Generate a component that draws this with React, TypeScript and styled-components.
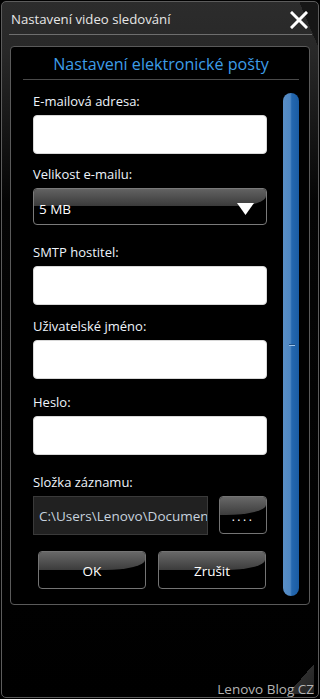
import styled, { createGlobalStyle } from "styled-components";

const FONT = `"Open Sans", "Noto Sans", sans-serif`;

const GlobalStyle = createGlobalStyle`
  html, body {
    margin: 0;
    padding: 0;
    background: #000;
  }
  body {
    width: 320px;
    height: 699px;
    overflow: hidden;
    font-family: ${FONT};
  }
`;

type FieldDef = {
  label: string;
  gap: number;
  kind: "input" | "select";
};

const fields: FieldDef[] = [
  { label: "E-mailová adresa:", gap: 0, kind: "input" },
  { label: "Velikost e-mailu:", gap: 12, kind: "select" },
  { label: "SMTP hostitel:", gap: 19, kind: "input" },
  { label: "Uživatelské jméno:", gap: 13, kind: "input" },
  { label: "Heslo:", gap: 15, kind: "input" },
];

function App() {
  return (
    <>
      <GlobalStyle />
      <Window>
        <TitleBar>
          <TitleText>Nastavení video sledování</TitleText>
          <CloseButton aria-label="Zavřít">
            <svg width="18" height="18" viewBox="0 0 18 18">
              <path
                d="M2 2 L16 16 M16 2 L2 16"
                stroke="#fff"
                strokeWidth="3"
                strokeLinecap="square"
              />
            </svg>
          </CloseButton>
        </TitleBar>

        <Panel>
          <Heading>Nastavení elektronické pošty</Heading>
          <Divider />
          <Body>
            <Form>
              {fields.map((f) => (
                <Field key={f.label} $gap={f.gap}>
                  <Label>{f.label}</Label>
                  {f.kind === "input" ? (
                    <TextBox />
                  ) : (
                    <Select>
                      <SelectValue>5 MB</SelectValue>
                      <svg width="17" height="12" viewBox="0 0 17 12">
                        <path d="M0 0 H17 L8.5 12 Z" fill="#fff" />
                      </svg>
                    </Select>
                  )}
                </Field>
              ))}
              <Field $gap={19}>
                <Label>Složka záznamu:</Label>
                <PathRow>
                  <PathBox>C:\Users\Lenovo\Documents</PathBox>
                  <GlossButton $w={48} $h={38}>
                    <Dots>....</Dots>
                  </GlossButton>
                </PathRow>
              </Field>
              <Actions>
                <GlossButton $w={108} $h={38}>
                  <ButtonText>OK</ButtonText>
                </GlossButton>
                <GlossButton $w={108} $h={38}>
                  <ButtonText>Zrušit</ButtonText>
                </GlossButton>
              </Actions>
            </Form>
            <ScrollThumb>
              <Grip />
            </ScrollThumb>
          </Body>
        </Panel>

        <Watermark>Lenovo Blog CZ</Watermark>
        <ResizeGrip />
      </Window>
    </>
  );
}

const Window = styled.div`
  position: relative;
  box-sizing: border-box;
  margin: 1px 0 0 1px;
  width: 318px;
  height: 697px;
  border: 1px solid #5c5c5c;
  border-radius: 5px;
  overflow: hidden;
  background: linear-gradient(67deg, transparent 50%, #161616 50%) right top / 18px 46px no-repeat,
    linear-gradient(to bottom, #2c2c2c 0px, #282828 50px, #050505 200px, #000 100%);
`;

const TitleBar = styled.div`
  display: flex;
  align-items: center;
  justify-content: space-between;
  height: 31px;
  margin: 0 6px 0 7px;
  padding: 1px 3px 0 2px;
  border-bottom: 1px solid #6e6e6e;
`;

const TitleText = styled.span`
  font-size: 13.2px;
  color: #e6e6e6;
`;

const CloseButton = styled.div`
  display: flex;
  width: 18px;
  height: 18px;
  margin-top: 2px;
  margin-right: 1px;
`;

const Panel = styled.div`
  box-sizing: border-box;
  margin: 11px 8px 0 8px;
  height: 559px;
  padding: 7px 10px 7px 22px;
  border: 1px solid #5a5a5a;
  border-radius: 4px;
  background: #000;
`;

const Heading = styled.div`
  height: 20px;
  line-height: 20px;
  margin-left: -10px;
  text-align: center;
  font-size: 16.1px;
  color: #3d9de8;
`;

const Divider = styled.div`
  height: 1px;
  margin: 5px 0 13px -10px;
  background: #4a4a4a;
`;

const Body = styled.div`
  display: flex;
  justify-content: space-between;
  height: 503px;
`;

const Form = styled.div`
  display: flex;
  flex-direction: column;
  width: 234px;
`;

const Field = styled.div<{ $gap: number }>`
  display: flex;
  flex-direction: column;
  margin-top: ${(p) => p.$gap}px;
`;

const Label = styled.div`
  height: 16px;
  line-height: 16px;
  margin-bottom: 6px;
  font-size: 13px;
  color: #eef4fb;
`;

const TextBox = styled.div`
  box-sizing: border-box;
  height: 39px;
  background: #fff;
  border: 1px solid #d8d8d8;
  border-radius: 4px;
`;

const Select = styled.div`
  position: relative;
  box-sizing: border-box;
  display: flex;
  align-items: center;
  justify-content: space-between;
  height: 37px;
  padding: 4px 12px 0 5px;
  border: 1px solid #7a7a7a;
  border-radius: 4px;
  background: #000;
  overflow: hidden;

  &::before {
    content: "";
    position: absolute;
    left: 0;
    top: 0;
    right: 0;
    height: 17px;
    background: linear-gradient(to bottom, #626262, #3a3a3a);
    border-radius: 0 0 30px 0 / 0 0 10px 0;
  }

  & > * {
    position: relative;
  }
`;

const SelectValue = styled.span`
  font-size: 13.5px;
  color: #fff;
`;

const PathRow = styled.div`
  display: flex;
  justify-content: space-between;
  align-items: flex-start;
`;

const PathBox = styled.div`
  box-sizing: border-box;
  width: 175px;
  height: 39px;
  padding: 0 0 0 5px;
  line-height: 38px;
  font-size: 13.5px;
  color: #c6d2de;
  white-space: nowrap;
  overflow: hidden;
  background: #212121;
  border: 1px solid #3a3a3a;
`;

const GlossButton = styled.div<{ $w: number; $h: number }>`
  position: relative;
  box-sizing: border-box;
  display: flex;
  align-items: center;
  justify-content: center;
  width: ${(p) => p.$w}px;
  height: ${(p) => p.$h}px;
  border: 1px solid #747474;
  border-radius: 4px;
  background: #000;
  overflow: hidden;

  &::before {
    content: "";
    position: absolute;
    left: 0;
    top: 0;
    right: 0;
    height: 50%;
    background: linear-gradient(to bottom, #686868, #3c3c3c);
    border-radius: 0 0 40px 0 / 0 0 10px 0;
  }

  & > * {
    position: relative;
  }
`;

const ButtonText = styled.span`
  margin-top: 1px;
  font-size: 13.5px;
  color: #fff;
`;

const Dots = styled.span`
  margin-top: 2px;
  font-size: 12px;
  letter-spacing: 2.5px;
  color: #fff;
`;

const Actions = styled.div`
  display: flex;
  gap: 12px;
  margin-top: 16px;
  padding-left: 5px;
`;

const ScrollThumb = styled.div`
  display: flex;
  align-items: center;
  justify-content: center;
  width: 16px;
  border-radius: 8px;
  background: linear-gradient(
    to right,
    #5a8fc6 0%,
    #4f88c4 45%,
    #2468b0 55%,
    #1a5ba2 100%
  );
`;

const Grip = styled.div`
  width: 6px;
  height: 1px;
  margin-left: 1px;
  background: #9cc4ec;
  border-top: 1px solid #1d4f86;
`;

const Watermark = styled.div`
  position: absolute;
  right: 4px;
  bottom: -1px;
  z-index: 1;
  font-size: 13.5px;
  color: #b4b4b4;
`;

const ResizeGrip = styled.div`
  position: absolute;
  right: 4px;
  bottom: 3px;
  width: 26px;
  height: 30px;
  background: linear-gradient(to bottom right, transparent 50%, #2e2e2e 50%, #222 100%);
`;

export default App;
